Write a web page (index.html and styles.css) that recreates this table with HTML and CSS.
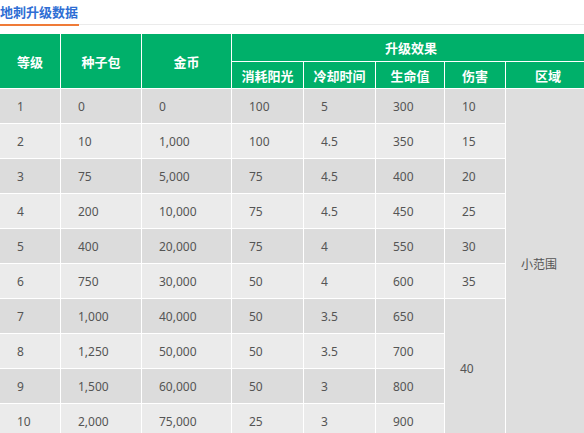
FILE: index.html
```html
<!DOCTYPE html>
<html lang="zh">
<head>
<meta charset="utf-8">
<link rel="stylesheet" href="styles.css">
</head>
<body>
<div class="title-bar"><h3 class="title">地刺升级数据</h3></div>
<div class="table-wrap">
<table class="data">
<colgroup>
<col class="c0"><col class="c1"><col class="c2"><col class="c3"><col class="c4"><col class="c5"><col class="c6"><col class="c7">
</colgroup>
<thead>
<tr class="h1">
<th rowspan="2">等级</th><th rowspan="2">种子包</th><th rowspan="2">金币</th><th colspan="5">升级效果</th>
</tr>
<tr class="h2">
<th>消耗阳光</th><th>冷却时间</th><th>生命值</th><th>伤害</th><th>区域</th>
</tr>
</thead>
<tbody>
<tr class="odd"><td>1</td><td>0</td><td>0</td><td>100</td><td>5</td><td>300</td><td>10</td><td rowspan="10" class="span">小范围</td></tr>
<tr class="even"><td>2</td><td>10</td><td>1,000</td><td>100</td><td>4.5</td><td>350</td><td>15</td></tr>
<tr class="odd"><td>3</td><td>75</td><td>5,000</td><td>75</td><td>4.5</td><td>400</td><td>20</td></tr>
<tr class="even"><td>4</td><td>200</td><td>10,000</td><td>75</td><td>4.5</td><td>450</td><td>25</td></tr>
<tr class="odd"><td>5</td><td>400</td><td>20,000</td><td>75</td><td>4</td><td>550</td><td>30</td></tr>
<tr class="even"><td>6</td><td>750</td><td>30,000</td><td>50</td><td>4</td><td>600</td><td>35</td></tr>
<tr class="odd"><td>7</td><td>1,000</td><td>40,000</td><td>50</td><td>3.5</td><td>650</td><td rowspan="4" class="span">40</td></tr>
<tr class="even"><td>8</td><td>1,250</td><td>50,000</td><td>50</td><td>3.5</td><td>700</td></tr>
<tr class="odd"><td>9</td><td>1,500</td><td>60,000</td><td>50</td><td>3</td><td>800</td></tr>
<tr class="even"><td>10</td><td>2,000</td><td>75,000</td><td>25</td><td>3</td><td>900</td></tr>
</tbody>
</table>
</div>
</body>
</html>
```

FILE: styles.css
```css
html, body {
  margin: 0;
  padding: 0;
  background: #fff;
  overflow: hidden;
}
body {
  font-family: "Noto Sans", "Noto Sans CJK SC", sans-serif;
  color: #555;
}
.title-bar {
  border-bottom: 1px solid #ebebeb;
  height: 24px;
  margin-bottom: 9px;
}
.title {
  display: inline-block;
  margin: 0;
  height: 22px;
  padding-right: 1px;
  font-size: 13px;
  line-height: 20px;
  font-weight: bold;
  color: #2e6ed4;
  border-bottom: 2px solid #ef7b38;
  font-family: "Noto Sans CJK SC", sans-serif;
}
.table-wrap {
  width: 584px;
  overflow: hidden;
}
.data {
  table-layout: fixed;
  width: 591px;
  border-collapse: separate;
  border-spacing: 0;
}
.c0 { width: 61px; }
.c1 { width: 81px; }
.c2 { width: 90px; }
.c3 { width: 72px; }
.c4 { width: 72px; }
.c5 { width: 69px; }
.c6 { width: 61px; }
.c7 { width: 85px; }
th, td {
  border-right: 1px solid #fff;
  border-bottom: 1px solid #fff;
  padding: 0;
  box-sizing: border-box;
}
th {
  background: #00b06a;
  color: #fff;
  font-size: 13px;
  font-weight: bold;
  font-family: "Noto Sans CJK SC", sans-serif;
  text-align: center;
}
.h1 th { height: 28px; }
.h2 th { height: 27px; }
td {
  height: 35px;
  font-size: 12px;
  padding-left: 17px;
  text-align: left;
  vertical-align: middle;
}
.odd td { background: #dcdcdc; }
.even td { background: #ebebeb; }
td.span { background: #dedede !important; padding-left: 15px; }
```
